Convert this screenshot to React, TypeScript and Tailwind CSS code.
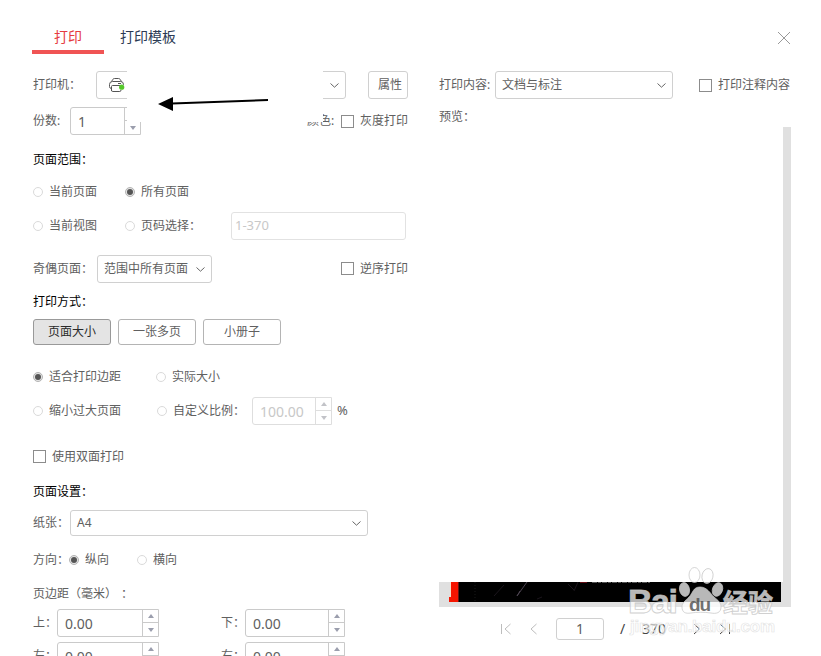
import type { ReactNode } from "react";
import clsx from "clsx";

const App = () => {
  return (
    <main className="relative h-[656px] w-[821px] overflow-hidden bg-white font-['Noto_Sans','Noto_Sans_CJK_SC',sans-serif] text-xs text-[#606060]">
      <Header />
      <div className="flex gap-[31px] pt-[17px] pl-[33px]">
        <Settings />
        <Preview />
      </div>
      <Arrow />
    </main>
  );
};

export default App;

const Header = () => (
  <header className="flex h-[54px] pt-5 pl-8 text-sm">
    <div className="flex h-[34px] w-[72px] justify-center border-b-4 border-[#f05454] pt-1.5 leading-[22px] text-[#e53a40]">
      打印
    </div>
    <div className="ml-4 pt-1.5 leading-[22px] text-[#2c3a54]">打印模板</div>
    <svg className="mt-3 ml-[602px] size-3 text-[#999]" viewBox="0 0 12 12" fill="none" stroke="currentColor">
      <path d="M0 0l12 12M12 0L0 12" />
    </svg>
  </header>
);

const Settings = () => (
  <section className="w-[375px] shrink-0">
    <div className="flex h-7 items-center">
      <span className="w-[63px]">打印机：</span>
      <div className="flex h-7 w-[250px] items-center justify-between rounded-[3px] border border-[#d0d0d0] pr-1.5 pl-3">
        <PrinterIcon />
        <Chevron />
      </div>
      <button className="ml-[22px] h-7 w-10 rounded-[3px] border border-[#d0d0d0] pl-1">属性</button>
    </div>
    <div className="mt-2 flex h-7 items-center">
      <span className="w-[37px]">份数:</span>
      <Spinner value="1" className="w-[71px]" />
      <span className="ml-[166px] w-[34px]">颜色:</span>
      <Checkbox>灰度打印</Checkbox>
    </div>

    <Heading className="mt-[15px]">页面范围：</Heading>
    <div className="mt-3 flex h-5 items-center">
      <Radio className="w-[92px]">当前页面</Radio>
      <Radio checked>所有页面</Radio>
    </div>
    <div className="mt-2.5 flex h-7 items-center">
      <Radio className="w-[92px]">当前视图</Radio>
      <Radio className="w-[106px]">页码选择：</Radio>
      <div className="flex h-7 w-[175px] items-center rounded-[3px] border border-[#e2e2e2] pl-[3px] text-[13px] text-[#c8c8c8]">
        1-370
      </div>
    </div>
    <div className="mt-[15px] flex h-7 items-center">
      <span className="w-16">奇偶页面：</span>
      <Select className="h-7 w-[115px]">范围中所有页面</Select>
      <Checkbox className="mb-px ml-[129px]">逆序打印</Checkbox>
    </div>

    <Heading className="mt-[9px]">打印方式：</Heading>
    <div className="mt-[7px] flex gap-[7px]">
      <ModeButton active>页面大小</ModeButton>
      <ModeButton>一张多页</ModeButton>
      <ModeButton>小册子</ModeButton>
    </div>
    <div className="mt-[22px] flex h-5 items-center">
      <Radio checked className="w-[123px]">适合打印边距</Radio>
      <Radio>实际大小</Radio>
    </div>
    <div className="mt-2.5 flex h-7 items-center">
      <Radio className="w-[124px]">缩小过大页面</Radio>
      <Radio className="w-[95px]">自定义比例：</Radio>
      <Spinner value="100.00" disabled className="w-20" />
      <span className="ml-[5px] text-[13px]">%</span>
    </div>
    <div className="mt-[21px] flex h-5 items-center">
      <Checkbox>
        <span className="pt-0.5">使用双面打印</span>
      </Checkbox>
    </div>

    <Heading className="mt-4">页面设置：</Heading>
    <div className="mt-2 flex h-[26px] items-center">
      <span className="w-[37px]">纸张：</span>
      <Select className="h-[26px] w-[298px]">A4</Select>
    </div>
    <div className="mt-[14px] flex h-5 items-center">
      <span className="w-9">方向：</span>
      <Radio checked className="w-[68px]">纵向</Radio>
      <Radio>横向</Radio>
    </div>
    <div className="mt-3.5 flex h-5 leading-5">
      页边距（毫米）<span className="ml-1">：</span>
    </div>
    <div className="mt-[5px] flex flex-col gap-[5px]">
      <MarginRow left="上" right="下" />
      <MarginRow left="左" right="右" />
    </div>
  </section>
);

const Preview = () => (
  <section className="w-[352px] shrink-0">
    <div className="flex h-7 items-center">
      <span className="w-14">打印内容:</span>
      <Select className="h-7 w-[178px]">文档与标注</Select>
      <Checkbox className="ml-[26px]">打印注释内容</Checkbox>
    </div>
    <div className="mt-2 h-5 leading-5">预览：</div>
    <div className="flex h-[480px] w-[352px] bg-[#e0e0e0]">
      <div className="flex h-[475px] w-[344px] flex-col">
        <div className="h-[455px] bg-white" />
        <PagePhoto />
      </div>
    </div>
    <div className="mt-[11px] flex h-[22px] items-center">
      <svg className="ml-[62px] h-3 w-11" viewBox="0 0 44 12" fill="none" stroke="#bdbdbd">
        <path d="M.5 1v10M9.500 1L4 6l5.500 5M35.500 1L30 6l5.500 5" />
      </svg>
      <div className="ml-[11px] flex h-[22px] w-12 items-center justify-center rounded-[3px] border border-[#d0d0d0] text-sm">
        1
      </div>
      <span className="ml-4 w-[22px] text-sm text-[#444]">/</span>
      <span className="w-[26px] text-sm text-[#444]">370</span>
      <svg className="ml-[25px] h-3 w-10" viewBox="0 0 40 12" fill="none" stroke="#444">
        <path d="M1 1l5.500 5L1 11M27 1l5.500 5L27 11M36.500 1v10" />
      </svg>
    </div>
    <Watermark />
  </section>
);

const Heading = ({ children, className }: { children: ReactNode; className?: string }) => (
  <h2 className={clsx("h-5 leading-5 text-black", className)}>{children}</h2>
);

const Radio = ({ children, checked, className }: { children: ReactNode; checked?: boolean; className?: string }) => (
  <label className={clsx("flex shrink-0 items-center gap-1.5 whitespace-nowrap", className)}>
    <span
      className={clsx(
        "flex size-2.5 shrink-0 items-center justify-center rounded-full border",
        checked ? "border-[#b4b4b4] bg-[#e4e4e4]" : "border-[#dadada]"
      )}
    >
      {checked && <span className="size-1.5 rounded-full bg-[#555]" />}
    </span>
    {children}
  </label>
);

const Checkbox = ({ children, className }: { children: ReactNode; className?: string }) => (
  <label className={clsx("flex items-center gap-1.5 whitespace-nowrap", className)}>
    <span className="size-[13px] border border-[#8c8c8c]" />
    {children}
  </label>
);

const Select = ({ children, className }: { children: ReactNode; className?: string }) => (
  <div className={clsx("flex items-center justify-between rounded-[3px] border border-[#d0d0d0] px-1.5 whitespace-nowrap", className)}>
    {children}
    <Chevron />
  </div>
);

const Chevron = () => (
  <svg className="h-[5px] w-[9px] shrink-0" viewBox="0 0 9 5" fill="none" stroke="#666">
    <path d="M.5.500l4 3.700 4-3.700" />
  </svg>
);

const ModeButton = ({ children, active }: { children: ReactNode; active?: boolean }) => (
  <button
    className={clsx(
      "h-[26px] w-[78px] rounded-[3px] border",
      active ? "border-[#999] bg-[#e4e4e4] text-[#2a2a2a]" : "border-[#b4b4b4]"
    )}
  >
    {children}
  </button>
);

const Spinner = ({ value, disabled, className }: { value: string; disabled?: boolean; className?: string }) => (
  <div
    className={clsx(
      "flex h-7 rounded-l-[3px] border",
      disabled ? "border-[#dedede] text-[#c8c8c8]" : "border-[#cacaca]",
      className
    )}
  >
    <span className="flex flex-1 items-center pt-px pl-[7px] text-sm">{value}</span>
    <div className="flex w-4 flex-col border-l border-inherit text-[#9b9ead]">
      <span className="flex h-[13px] items-center justify-center border-b border-inherit">
        <svg className="h-1 w-[6px]" viewBox="0 0 6 4" fill={disabled ? "#c2c3c8" : "currentColor"}>
          <path d="M3 0l3 4H0z" />
        </svg>
      </span>
      <span className="flex h-[13px] items-center justify-center">
        <svg className="h-1 w-[6px]" viewBox="0 0 6 4" fill={disabled ? "#c2c3c8" : "currentColor"}>
          <path d="M0 0h6L3 4z" />
        </svg>
      </span>
    </div>
  </div>
);

const MarginRow = ({ left, right }: { left: string; right: string }) => (
  <div className="flex h-7 items-center">
    <span className="w-6">{left}：</span>
    <Spinner value="0.00" className="w-[102px]" />
    <span className="ml-[62px] w-6">{right}：</span>
    <Spinner value="0.00" className="w-[100px]" />
  </div>
);

const PrinterIcon = () => (
  <svg className="h-[14px] w-4" viewBox="0 0 16 14" fill="none" stroke="#555">
    <path d="M2.500 3.500L4 1.200Q4.500.500 5.500.500h4Q10.500.500 11 1.200l1.500 2.300M2.500 10.500Q.5 10.500.5 8.500v-2q0-3 3-3h8q3 0 3 3V7M2.500 13V8.500q0-1 1-1h8M2.500 12.200q0 1.300 1.300 1.300h7q1.200 0 1.200-1.500M9 5.500h3" />
    <circle cx="12.700" cy="9.200" r="2.600" fill="#55c72b" stroke="none" />
  </svg>
);

// bottom edge of the first page, visible under the blank preview area
const PagePhoto = () => (
  <svg className="ml-2.5 h-5 w-[332px]" viewBox="0 0 332 20">
    <path d="M10 0h322v20H10z" fill="#000" />
    <path d="M1 0h1v15H1z" fill="#f4dfc8" />
    <path d="M2 0h7v20H0v-5h2z" fill="#f51500" />
    <path d="M9 0h1v20H9z" fill="#651510" />
    <path d="M78 0l-10 14M71 9l-3 5" stroke="#4c4350" />
    <path d="M55 3l-10 11M129 0l-4 9M88 17l5-2M119 2l6 6" stroke="#1b151c" />
    <path d="M131 0h7v1h-7z" fill="#620c13" />
    <path d="M143 .500h58" stroke="#555" strokeDasharray="5 1 3 1" />
    <path d="M26 0v20" stroke="#191919" strokeDasharray="1 2" />
  </svg>
);

const Arrow = () => (
  <svg className="absolute top-[60px] left-[127px] h-[62px] w-[196px]" viewBox="0 0 196 62">
    <rect width="196" height="62" fill="#fff" />
    <path d="M45 43.500L141 40" stroke="#000" strokeWidth="2" />
    <path d="M31 44l15-7v14z" />
  </svg>
);

const Watermark = () => (
  <svg
    className="absolute top-[560px] left-[620px] h-20 w-[160px] font-['Liberation_Sans','Noto_Sans_CJK_SC',sans-serif] font-bold"
    viewBox="0 0 160 80"
    fill="#fff"
    fillOpacity=".72"
    stroke="#c4c4c4"
    strokeOpacity=".8"
    strokeWidth=".9"
  >
    <text x="8" y="53" fontSize="34" textLength="50">Bai</text>
    <ellipse cx="64.500" cy="29.500" rx="5" ry="7" transform="rotate(-12 64.500 29.500)" />
    <ellipse cx="74.500" cy="15" rx="5.500" ry="7.500" />
    <ellipse cx="87.500" cy="16" rx="5.500" ry="7.500" transform="rotate(12 87.500 16)" />
    <ellipse cx="97.500" cy="29.500" rx="5" ry="7" transform="rotate(20 97.500 29.500)" />
    <path d="M80 27c7 0 10 6 14 10 5 4 7 6 7 10 0 6-5 7-10 6-7-1-14-1-20 0-6 1-9-1-9-6 0-4 3-6 7-10s4-10 11-10z" />
    <text x="69" y="51" fontSize="19" textLength="22" fill="#444" fillOpacity=".75" stroke="none">du</text>
    <text x="103" y="52" fontSize="25" textLength="50">经验</text>
    <text x="10" y="72" fontSize="17" textLength="145" fillOpacity=".6" stroke="#ddd" strokeWidth=".7">
      jingyan.baidu.com
    </text>
  </svg>
);
